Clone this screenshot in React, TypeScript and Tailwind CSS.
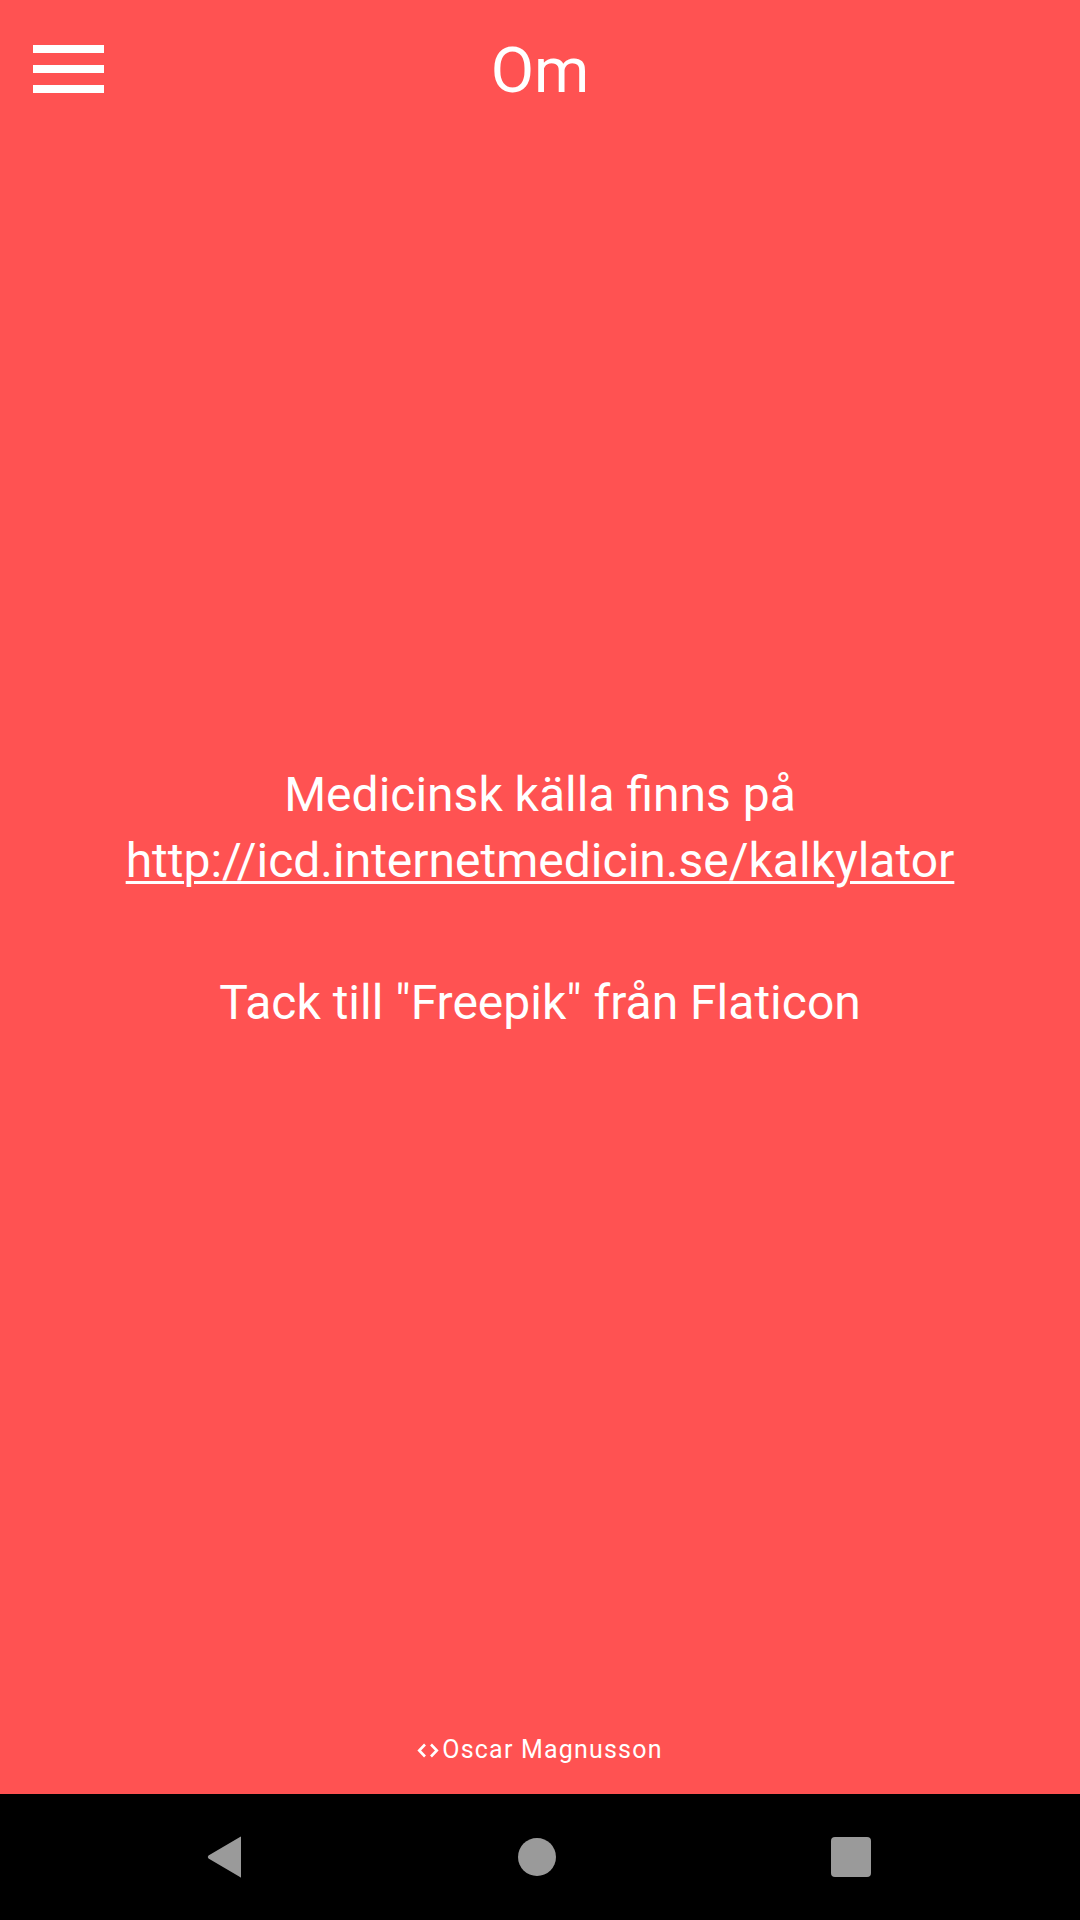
import React from "react";

export default function App() {
  return (
    <div
      className="w-[1080px] h-[1920px] bg-[#ff5252] flex flex-col text-white"
      style={{ fontFamily: "Roboto, 'Noto Sans', sans-serif" }}
    >
      <header className="h-[147px] grid grid-cols-[1fr_auto_1fr] shrink-0">
        <div className="pl-[33px] pt-[45px] flex flex-col gap-[12px]">
          <div className="w-[71px] h-[8px] bg-white" />
          <div className="w-[71px] h-[8px] bg-white" />
          <div className="w-[71px] h-[8px] bg-white" />
        </div>
        <h1 className="pt-[34px] text-[63px] leading-[74px] font-normal">Om</h1>
        <div />
      </header>

      <main className="flex-1 flex flex-col items-center text-center pt-[615px]">
        <p className="text-[48px] leading-[66px]">
          Medicinsk källa finns på
          <br />
          <span className="underline decoration-[3px] underline-offset-[4px]">
            http://icd.internetmedicin.se/kalkylator
          </span>
        </p>
        <p className="mt-[76px] text-[48px] leading-[66px]">
          Tack till "Freepik" från Flaticon
        </p>
        <div className="flex-1" />
        <div className="flex items-center pb-[30px] text-[25px] leading-[28px] tracking-[1.2px]">
          <svg width="22" height="15" viewBox="0 0 22 15" className="mr-[3px] mt-[1px]">
            <path d="M8 1.5 L2.2 7.5 L8 13.5" stroke="white" strokeWidth="2.6" fill="none" />
            <path d="M14 1.5 L19.8 7.5 L14 13.5" stroke="white" strokeWidth="2.6" fill="none" />
          </svg>
          <span>Oscar Magnusson</span>
        </div>
      </main>

      <nav className="h-[126px] bg-black shrink-0 flex items-center justify-center">
        <div className="w-[1080px] flex items-center justify-between pl-[207px] pr-[209px]">
          <svg width="36" height="42" viewBox="0 0 36 42">
            <path
              d="M34 1 L34 41 Q34 42 33 41 L1.5 22.5 Q0 21 1.5 19.5 L33 1 Q34 0 34 1 Z"
              fill="#9a9a9a"
            />
          </svg>
          <div className="w-[38px] h-[38px] rounded-full bg-[#9a9a9a]" />
          <div className="w-[40px] h-[40px] rounded-[4px] bg-[#9a9a9a]" />
        </div>
      </nav>
    </div>
  );
}
